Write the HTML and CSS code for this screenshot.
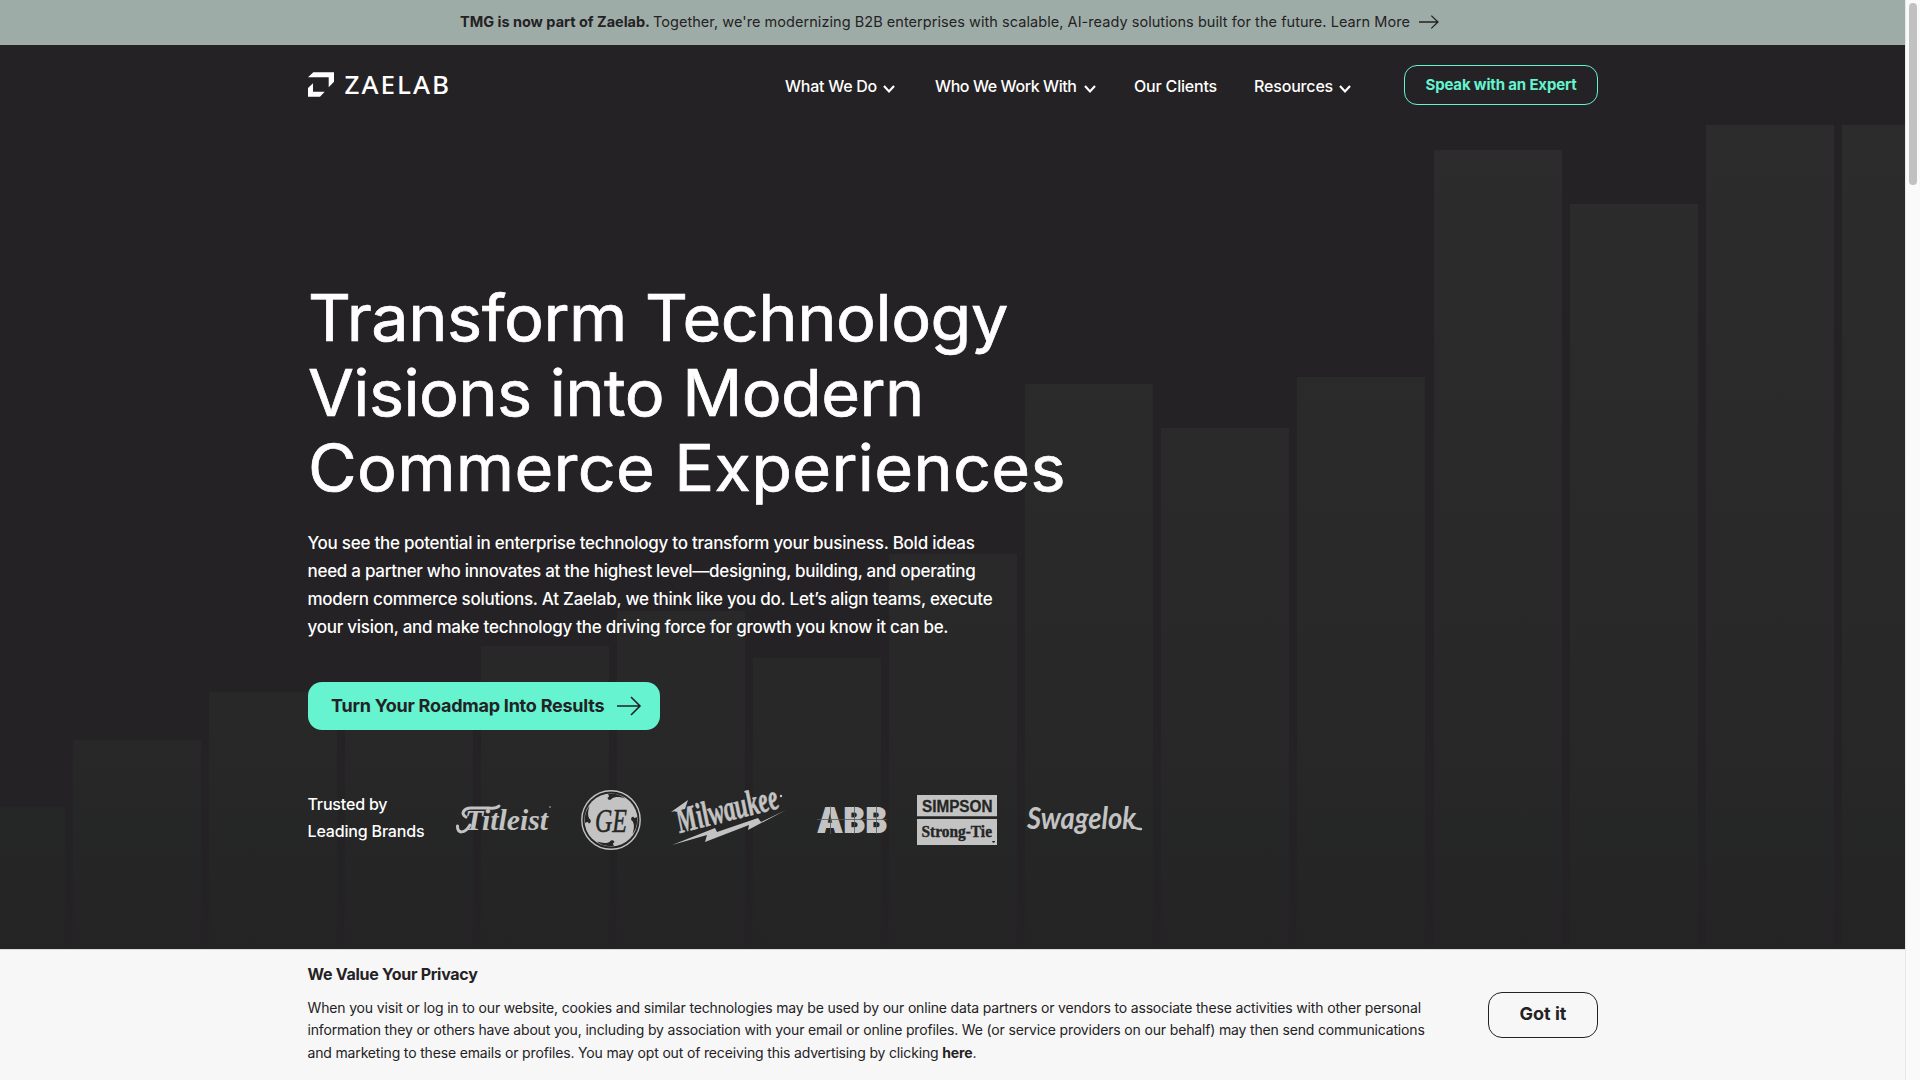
FILE: index.html
```html
<!DOCTYPE html>
<html lang="en">
<head>
<meta charset="utf-8">
<title>Zaelab</title>
<link rel="stylesheet" href="styles.css">
</head>
<body>
<div class="page">
  <a class="announce">
    <strong>TMG is now part of Zaelab.</strong>
    <span>Together, we're modernizing B2B enterprises with scalable, AI-ready solutions built for the future. Learn More</span>
    <svg class="announce-arrow" width="20" height="14" viewBox="0 0 20 14"><path d="M0 7H19M12.3 .6 19 7 12.3 13.4"/></svg>
  </a>

  <main class="hero">
    <div class="bars">
      <i style="height:142px"></i><i style="height:209px"></i><i style="height:257px"></i><i style="height:240px"></i>
      <i style="height:303px"></i><i style="height:338px"></i><i style="height:291px"></i><i style="height:395px"></i>
      <i style="height:565px"></i><i style="height:521px"></i><i style="height:572px"></i><i style="height:799px"></i>
      <i style="height:745px"></i><i style="height:824px"></i><i style="height:824px"></i>
    </div>

    <div class="content">
      <header class="header">
        <svg class="brand" width="144" height="30" viewBox="0 0 144 30">
          <path d="M0 7.3 5.3 2.3H26V11.7L20.7 17.3V7.3ZM0 26.7V18L5 13.3V21.7H16.7L12 26.7Z"/>
          <text x="36.6" y="23.6" textLength="104.5">ZAELAB</text>
        </svg>
        <nav class="nav">
          <a class="nav-what">What We Do <svg width="12" height="8" viewBox="0 0 12 8"><path d="M1 1 6 6.4 11 1"/></svg></a>
          <a class="nav-who">Who We Work With <svg width="12" height="8" viewBox="0 0 12 8"><path d="M1 1 6 6.4 11 1"/></svg></a>
          <a class="nav-clients">Our Clients</a>
          <a class="nav-resources">Resources <svg width="12" height="8" viewBox="0 0 12 8"><path d="M1 1 6 6.4 11 1"/></svg></a>
        </nav>
        <a class="expert">Speak with an Expert</a>
      </header>

      <h1><span class="t1">Transform Technology</span><span class="t2">Visions into Modern</span><span class="t3">Commerce Experiences</span></h1>

      <p class="lead"><span>You see the potential in enterprise technology to transform your business. Bold ideas</span><span class="tight">need a partner who innovates at the highest level—designing, building, and operating</span><span>modern commerce solutions. At Zaelab, we think like you do. Let’s align teams, execute</span><span>your vision, and make technology the driving force for growth you know it can be.</span></p>

      <a class="cta">Turn Your Roadmap Into Results
        <svg width="24" height="20" viewBox="0 0 24 20"><path d="M0 10H23M14 1 23 10 14 19"/></svg>
      </a>

      <section class="brands">
        <p>Trusted by<br>Leading Brands</p>
        <div class="logos">
          <svg width="95" height="60" viewBox="0 0 95 60">
            <path class="stroke" d="M10 27C4 24 8 18 15 18H33Q40 19 43 16" stroke-width="3"/>
            <path class="stroke" d="M1.5 36C1 44 9 44 14 35" stroke-width="3"/>
            <text class="titleist" x="9" y="40" textLength="83" lengthAdjust="spacingAndGlyphs">Titleist</text>
            <circle cx="94" cy="17" r=".8"/>
          </svg>
          <svg width="60" height="60" viewBox="0 0 60 60">
            <circle class="stroke" cx="30" cy="30" r="29.2" stroke-width="1.4"/>
            <circle cx="30" cy="30" r="26.6"/>
            <g class="cut">
              <path id="swirl" d="M27 4.2C33 3 40 5 44 8.5C38 6.6 34 6.6 31 8.6C29.5 11 25.8 9.6 26.8 7.2C28 7.6 28.7 6.3 27 4.2Z"/>
              <use href="#swirl" transform="rotate(90 30 30)"/>
              <use href="#swirl" transform="rotate(180 30 30)"/>
              <use href="#swirl" transform="rotate(270 30 30)"/>
              <text class="ge" x="14" y="42" textLength="32" lengthAdjust="spacingAndGlyphs">GE</text>
            </g>
          </svg>
          <svg width="116" height="60" viewBox="0 0 116 60">
            <text class="milwaukee" transform="translate(9 43) rotate(-14) skewX(4)" textLength="104" lengthAdjust="spacingAndGlyphs">Milwaukee</text>
            <path d="M0 22 17 10 14 19ZM1 55 44 38 46 42 87 28 90 32 115 20 77 40 78 35 34 52 36 45Z"/>
            <circle cx="110" cy="6" r="1.2"/>
          </svg>
          <svg width="70" height="60" viewBox="0 0 70 60">
            <text class="abb" x="-.5" y="43" textLength="27" lengthAdjust="spacingAndGlyphs">A</text>
            <text class="abb" x="26.3" y="43" textLength="22" lengthAdjust="spacingAndGlyphs">B</text>
            <text class="abb" x="48.3" y="43" textLength="22" lengthAdjust="spacingAndGlyphs">B</text>
            <path class="lines" d="M0 29.5H70M13.5 16V44M37.5 16V44M59.5 16V44"/>
          </svg>
          <svg width="80" height="60" viewBox="0 0 80 60">
            <path d="M0 5H80V26.3H0ZM0 29H80V55H0Z"/>
            <g class="cut">
              <text class="simpson" x="5" y="21.5" textLength="70.5" lengthAdjust="spacingAndGlyphs">SIMPSON</text>
              <text class="strongtie" x="4.5" y="47" textLength="70.5" lengthAdjust="spacingAndGlyphs">Strong-Tie</text>
              <path d="M75 51H78V52L76 53Z"/>
            </g>
          </svg>
          <svg width="116" height="60" viewBox="0 0 116 60">
            <text class="swagelok" x="0" y="39" textLength="109" lengthAdjust="spacingAndGlyphs">Swagelok</text>
            <path class="stroke" d="M103 34Q108 39.5 114 39" stroke-width="2.4"/>
          </svg>
        </div>
      </section>
    </div>
  </main>

  <aside class="privacy">
    <div class="privacy-text">
      <h2>We Value Your Privacy</h2>
      <p>When you visit or log in to our website, cookies and similar technologies may be used by our online data partners or vendors to associate these activities with other personal<br>information they or others have about you, including by association with your email or online profiles. We (or service providers on our behalf) may then send communications<br>and marketing to these emails or profiles. You may opt out of receiving this advertising by clicking <b>here</b>.</p>
    </div>
    <a class="got-it">Got it</a>
  </aside>
</div>
<div class="scrollbar"><div class="thumb"></div></div>
</body>
</html>
```
FILE: styles.css
```css
* { box-sizing: border-box; }

body {
  margin: 0;
  height: 1080px;
  display: flex;
  overflow: hidden;
  background: #242224;
  font-family: "Inter", sans-serif;
  color: #fff;
}

h1, h2, p { margin: 0; }

svg { display: block; flex: none; overflow: visible; }

.page {
  flex: 1;
  min-width: 0;
  display: flex;
  flex-direction: column;
}

/* Announcement strip */
.announce {
  height: 45px;
  padding: 0 0 2px 460px;
  display: flex;
  align-items: center;
  background: #9eaca7;
  color: #242224;
  font-size: 14.5px;
  letter-spacing: .05px;
  white-space: nowrap;
}
.announce strong { letter-spacing: -.01px; margin-right: 3px; }
.announce-arrow { margin-left: 9px; fill: none; stroke: #242224; stroke-width: 1.3; }

/* Hero */
.hero {
  flex: 1;
  min-height: 0;
  display: grid;
  grid-template: 904px / 1905px;
  overflow: hidden;
}
.bars, .content { grid-area: 1 / 1; }
.bars {
  margin-left: -63.5px;
  display: flex;
  align-items: flex-end;
  gap: 8.1px;
  overflow: hidden;
}
.bars i {
  flex: none;
  width: 128px;
  background: linear-gradient(to top, #242425 0, #272827 230px, #2b2c2b 824px);
}
.content {
  z-index: 1;
  width: 1290.5px;
  margin-left: 307.5px;
  display: flex;
  flex-direction: column;
  align-items: flex-start;
}

.header {
  width: 100%;
  padding: 20px 0 0 .5px;
  display: flex;
  align-items: flex-start;
}
.brand { margin-top: 5px; fill: #fff; }
.brand text { font: 500 26px "Noto Sans", sans-serif; }
.nav {
  margin-left: 333px;
  padding-top: 9px;
  display: flex;
  font-size: 16px;
  font-weight: 500;
  line-height: 24px;
}
.nav a { display: flex; align-items: center; white-space: nowrap; }
.nav svg { margin: 6px 0 0 6px; fill: none; stroke: #fff; stroke-width: 2.2; }
.nav-what { width: 150px; letter-spacing: -.26px; }
.nav-who { width: 199px; letter-spacing: -.42px; }
.nav .nav-who svg { margin-left: 7px; }
.nav-clients { width: 120px; letter-spacing: -.19px; }
.nav-resources { letter-spacing: -.17px; }
.expert {
  width: 194px;
  height: 40px;
  margin-left: auto;
  border: 1px solid #65f3d0;
  border-radius: 13px;
  color: #65f3d0;
  font-size: 15px;
  font-weight: 700;
  line-height: 37px;
  letter-spacing: -.16px;
  text-align: center;
}

h1 {
  margin-top: 175px;
  font-size: 64px;
  font-weight: 400;
  line-height: 75px;
  white-space: nowrap;
  transform: scaleX(1.04);
  transform-origin: left;
  -webkit-text-stroke: .7px #fff;
}
h1 span, .lead span { display: block; }
.t1 { letter-spacing: -.45px; }
.t2 { letter-spacing: -.55px; }
.t3 { letter-spacing: .3px; }

.lead {
  margin-top: 24px;
  font-size: 17px;
  font-weight: 500;
  line-height: 28px;
  letter-spacing: -.262px;
  white-space: nowrap;
}
.tight { letter-spacing: -.29px; }

.cta {
  width: 352px;
  height: 48px;
  margin: 41px 0 0 .5px;
  padding: 0 19px 2px 23px;
  display: flex;
  align-items: center;
  justify-content: space-between;
  border-radius: 14px;
  background: #65f3d0;
  color: #242224;
  font-size: 18px;
  font-weight: 700;
  letter-spacing: -.23px;
}
.cta svg { margin-top: 2px; fill: none; stroke: #242224; stroke-width: 1.6; }

.brands {
  margin-top: 60px;
  display: flex;
}
.brands p {
  width: 148px;
  padding-top: 1px;
  font-size: 16px;
  font-weight: 500;
  line-height: 27px;
  letter-spacing: -.17px;
}
.logos { display: flex; gap: 30px; fill: #c3c3c3; }
.stroke { fill: none; stroke: #c3c3c3; stroke-linecap: round; }
.cut { fill: #252625; }
.lines { stroke: #55595a; stroke-width: .8; }
.titleist { font: italic 700 30px "Liberation Serif", serif; }
.ge { font: italic 400 34px "Liberation Serif", serif; stroke: #252625; stroke-width: .5; }
.milwaukee { font: italic 700 36px "Liberation Serif", serif; stroke: #c3c3c3; stroke-width: .6; }
.abb { font: 900 36px "Inter", sans-serif; }
.simpson { font: 700 16px "Liberation Sans", sans-serif; stroke: #252625; stroke-width: .3; }
.strongtie { font: 700 17px "Liberation Serif", serif; stroke: #252625; stroke-width: .4; }
.swagelok { font: italic 700 31px "Lato", sans-serif; }

/* Privacy notice */
.privacy {
  height: 131px;
  padding-left: 307.5px;
  display: flex;
  border-top: 1px solid #dcdcdc;
  background: #f7f7f7;
  color: #242224;
}
.privacy-text { width: 1180.5px; padding-top: 12px; }
.privacy h2 {
  font-size: 16px;
  font-weight: 700;
  line-height: 24px;
  letter-spacing: -.28px;
}
.privacy p {
  margin-top: 11px;
  font-size: 14px;
  line-height: 22.4px;
  letter-spacing: -.158px;
  white-space: nowrap;
}
.got-it {
  width: 110px;
  height: 46px;
  margin-top: 42px;
  border: 1px solid #242224;
  border-radius: 14px;
  font-size: 18px;
  font-weight: 700;
  line-height: 42px;
  text-align: center;
}

/* Page scrollbar */
.scrollbar {
  width: 15px;
  padding: 3px 3px 0 4px;
  border-left: 1px solid #e8e8e8;
  background: #fafafa;
}
.thumb { width: 8px; height: 182px; margin-left: -1px; border-radius: 4px; background: #c1c1c1; }
```
